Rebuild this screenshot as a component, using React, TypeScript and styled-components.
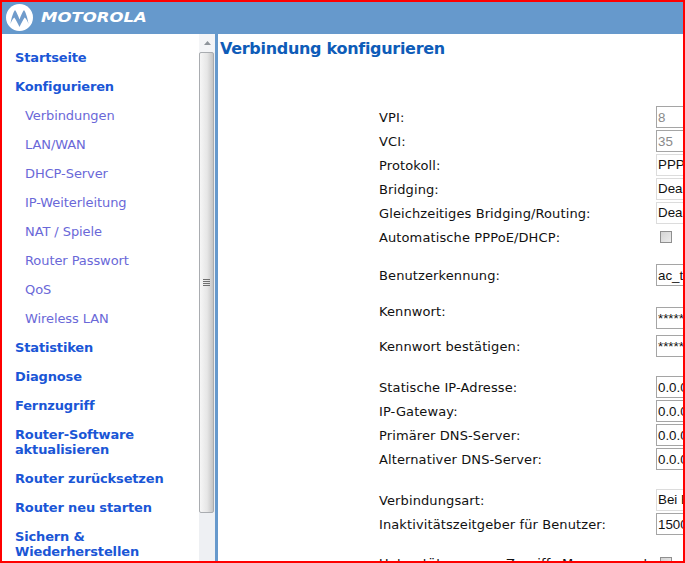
import React from 'react'
import styled, { createGlobalStyle } from 'styled-components'

const GlobalStyle = createGlobalStyle`
  html, body {
    margin: 0;
    padding: 0;
    background: #fff;
  }
`

const mainFont = `'DejaVu Sans', Verdana, sans-serif`
const fieldFont = `'Liberation Sans', Arial, sans-serif`

type NavEntry = { label: string; sub?: boolean }

const navEntries: NavEntry[] = [
  { label: 'Startseite' },
  { label: 'Konfigurieren' },
  { label: 'Verbindungen', sub: true },
  { label: 'LAN/WAN', sub: true },
  { label: 'DHCP-Server', sub: true },
  { label: 'IP-Weiterleitung', sub: true },
  { label: 'NAT / Spiele', sub: true },
  { label: 'Router Passwort', sub: true },
  { label: 'QoS', sub: true },
  { label: 'Wireless LAN', sub: true },
  { label: 'Statistiken' },
  { label: 'Diagnose' },
  { label: 'Fernzugriff' },
  { label: 'Router-Software aktualisieren' },
  { label: 'Router zurücksetzen' },
  { label: 'Router neu starten' },
  { label: 'Sichern & Wiederherstellen' },
]

const MotorolaMark = () => (
  <svg width="27" height="27" viewBox="0 0 27 27">
    <circle cx="13.5" cy="13.5" r="13.5" fill="#fff" />
    <path
      d="M4.5 20 C5.5 13 7.5 8 9 6 C10.5 8 12.3 12 13.5 15.5 C14.7 12 16.5 8 18 6 C19.5 8 21.5 13 22.5 20 C21.5 17 20 14.5 18.7 13.5 C17 16 15 20 13.5 23 C12 20 10 16 8.3 13.5 C7 14.5 5.5 17 4.5 20 Z"
      fill="#6f9bcb"
    />
  </svg>
)

const Scrollbar = () => (
  <ScrollTrack>
    <ScrollArrow>
      <svg width="9" height="6" viewBox="0 0 9 6">
        <path d="M4.5 1 L8 5 H1 Z" fill="#8f959b" />
      </svg>
    </ScrollArrow>
    <ScrollThumb>
      <Grip />
      <Grip />
      <Grip />
      <Grip />
    </ScrollThumb>
  </ScrollTrack>
)

export default function App() {
  return (
    <Frame>
      <GlobalStyle />
      <TopBar>
        <MotorolaMark />
        <Brand>MOTOROLA</Brand>
      </TopBar>
      <Main>
        <Sidebar>
          <Nav>
            {navEntries.map((entry) => (
              <NavLink key={entry.label} $sub={entry.sub}>
                {entry.label}
              </NavLink>
            ))}
          </Nav>
          <Scrollbar />
        </Sidebar>
        <Content>
          <Title>Verbindung konfigurieren</Title>
          <Form>
            <Section>
              <Row>
                <Label>VPI:</Label>
                <Input value="8" readOnly disabled />
              </Row>
              <Row>
                <Label>VCI:</Label>
                <Input value="35" readOnly disabled />
              </Row>
              <Row>
                <Label>Protokoll:</Label>
                <Picker>PPPoE</Picker>
              </Row>
              <Row>
                <Label>Bridging:</Label>
                <Picker>Deaktiviert</Picker>
              </Row>
              <Row>
                <Label>Gleichzeitiges Bridging/Routing:</Label>
                <Picker>Deaktiviert</Picker>
              </Row>
              <Row>
                <Label>Automatische PPPoE/DHCP:</Label>
                <CheckBox type="checkbox" disabled />
              </Row>
            </Section>
            <AccountSection>
              <Row>
                <Label>Benutzerkennung:</Label>
                <Input value="ac_test" readOnly />
              </Row>
              <PasswordRow>
                <Label>Kennwort:</Label>
                <Input value="********" readOnly />
              </PasswordRow>
              <ConfirmRow>
                <Label>Kennwort bestätigen:</Label>
                <Input value="********" readOnly />
              </ConfirmRow>
            </AccountSection>
            <Section>
              <Row>
                <Label>Statische IP-Adresse:</Label>
                <Input value="0.0.0.0" readOnly />
              </Row>
              <Row>
                <Label>IP-Gateway:</Label>
                <Input value="0.0.0.0" readOnly />
              </Row>
              <Row>
                <Label>Primärer DNS-Server:</Label>
                <Input value="0.0.0.0" readOnly />
              </Row>
              <Row>
                <Label>Alternativer DNS-Server:</Label>
                <Input value="0.0.0.0" readOnly />
              </Row>
            </Section>
            <Section>
              <Row>
                <Label>Verbindungsart:</Label>
                <Picker>Bei Bedarf</Picker>
              </Row>
              <Row>
                <Label>Inaktivitätszeitgeber für Benutzer:</Label>
                <Input value="1500" readOnly />
              </Row>
            </Section>
            <LastSection>
              <Row>
                <Label>Unterstützung von Zugriffs-Management:</Label>
                <CheckBox type="checkbox" disabled />
              </Row>
            </LastSection>
          </Form>
        </Content>
      </Main>
    </Frame>
  )
}

const Frame = styled.div`
  box-sizing: border-box;
  display: flex;
  flex-direction: column;
  width: 685px;
  height: 563px;
  border: 2px solid #ff0000;
  overflow: hidden;
  font-family: ${mainFont};
  background: #fff;
`

const TopBar = styled.header`
  flex: none;
  display: flex;
  align-items: center;
  gap: 8px;
  height: 32px;
  padding: 0 0 2px 4px;
  box-sizing: border-box;
  background: #6699cc;
`

const Brand = styled.span`
  display: inline-block;
  transform: scaleX(1.18);
  transform-origin: left center;
  color: #fff;
  font: italic bold 14px 'DejaVu Sans', Verdana, sans-serif;
`

const Main = styled.div`
  flex: 1;
  display: flex;
  min-height: 0;
`

const Sidebar = styled.aside`
  box-sizing: border-box;
  flex: none;
  display: flex;
  width: 216px;
  border-right: 3px solid #6699cc;
`

const Nav = styled.nav`
  box-sizing: border-box;
  width: 197px;
  padding: 16px 8px 0 13px;
  display: flex;
  flex-direction: column;
`

const NavLink = styled.a<{ $sub?: boolean }>`
  display: block;
  margin-bottom: 14px;
  padding-left: ${(p) => (p.$sub ? '10px' : '0')};
  font-size: 13px;
  line-height: 15px;
  letter-spacing: ${(p) => (p.$sub ? '-0.08px' : '-0.15px')};
  font-weight: ${(p) => (p.$sub ? 'normal' : 'bold')};
  color: ${(p) => (p.$sub ? '#6a68d8' : '#1a56d6')};
`

const ScrollTrack = styled.div`
  flex: none;
  display: flex;
  flex-direction: column;
  width: 16px;
  background: #eef0f3;
`

const ScrollArrow = styled.div`
  flex: none;
  display: flex;
  align-items: center;
  justify-content: center;
  height: 18px;
  background: #f4f5f7;
`

const ScrollThumb = styled.div`
  box-sizing: border-box;
  display: flex;
  flex-direction: column;
  align-items: center;
  justify-content: center;
  gap: 1px;
  width: 15px;
  height: 461px;
  border: 1px solid #a9acb0;
  border-radius: 2px;
  background: linear-gradient(to right, #f6f6f6, #e6e6e6 55%, #c4c4c4);
`

const Grip = styled.span`
  display: block;
  width: 7px;
  height: 1px;
  background: #6f6f6f;
`

const Content = styled.main`
  flex: 1;
  min-width: 0;
  padding-left: 2px;
  overflow: hidden;
`

const Title = styled.h1`
  margin: 5px 0 0;
  font-size: 16px;
  line-height: 20px;
  font-weight: bold;
  letter-spacing: -0.3px;
  color: #0e5cb8;
`

const Form = styled.div`
  display: flex;
  flex-direction: column;
  gap: 17px;
  margin-top: 46px;
  padding-left: 159px;
`

const Section = styled.section`
  display: flex;
  flex-direction: column;
`

const AccountSection = styled(Section)`
  margin-top: -3px;
`

const LastSection = styled(Section)`
  margin-top: -2px;
`

const Row = styled.div`
  display: flex;
  align-items: center;
  height: 24px;
`

const PasswordRow = styled(Row)`
  align-items: flex-start;
  height: 25px;
  margin-top: 17px;
  & > input {
    margin-top: 3px;
  }
`

const ConfirmRow = styled(Row)`
  margin-top: 5px;
`

const Label = styled.label`
  flex: none;
  width: 277px;
  font-size: 13px;
  letter-spacing: 0.11px;
  color: #111;
  white-space: nowrap;
`

const Input = styled.input`
  box-sizing: border-box;
  flex: none;
  width: 120px;
  height: 22px;
  padding: 0 1px;
  border: 1px solid #a5a5a5;
  background: #fff;
  color: #111;
  font-family: ${fieldFont};
  font-size: 13.33px;
  &:disabled {
    color: #8a8a8a;
  }
`

const Picker = styled.div`
  box-sizing: border-box;
  flex: none;
  width: 120px;
  height: 22px;
  padding: 0 1px;
  line-height: 20px;
  border: 1px solid #dcdcdc;
  font-family: ${fieldFont};
  font-size: 13.33px;
  color: #111;
  white-space: nowrap;
`

const CheckBox = styled.input`
  appearance: none;
  box-sizing: border-box;
  width: 12px;
  height: 12px;
  margin: 0 0 0 4px;
  border: 1px solid #8f8f8f;
  background: linear-gradient(135deg, #d4d4d4, #ececec);
`
